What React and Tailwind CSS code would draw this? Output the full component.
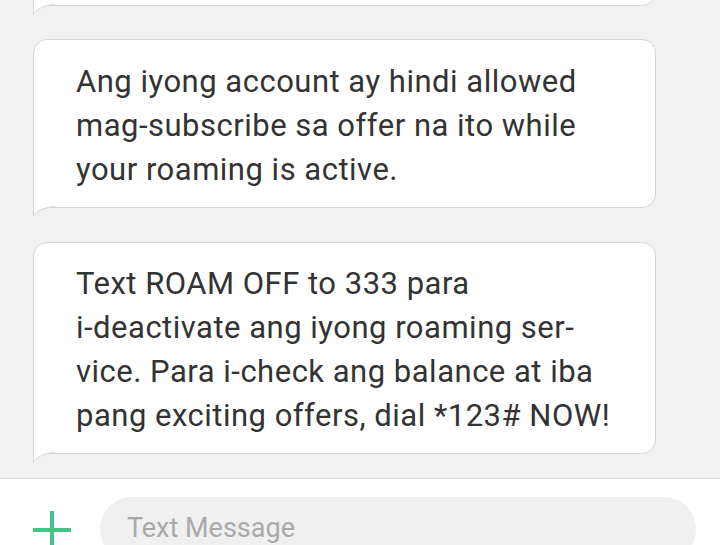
import React from "react";

const Tail = () => (
  <svg
    className="absolute left-[-1px] top-[calc(100%-1px)] w-[24px] h-[11px]"
    viewBox="0 0 24 11"
  >
    <path d="M0 0 V10 C4 5 10 1.5 22 0.5 L24 0 Z" fill="#ffffff" />
    <path
      d="M0.5 0 V10 C4 5 10 1.5 22 0.5"
      fill="none"
      stroke="#d6d6d6"
      strokeWidth="1"
    />
  </svg>
);

const Bubble = ({ lines, className = "" }) => (
  <div
    className={`relative ml-[33px] w-[623px] bg-white border border-[#d6d6d6] rounded-[14px] rounded-bl-none pl-[42px] pr-4 ${className}`}
  >
    {lines.map((line, i) => (
      <div key={i} className="whitespace-nowrap">
        {line}
      </div>
    ))}
    <Tail />
  </div>
);

const messages = [
  [
    "Ang iyong account ay hindi allowed",
    "mag-subscribe sa offer na ito while",
    "your roaming is active.",
  ],
  [
    "Text ROAM OFF to 333 para",
    "i-deactivate ang iyong roaming ser-",
    "vice. Para i-check ang balance at iba",
    "pang exciting offers, dial *123# NOW!",
  ],
];

export default function App() {
  return (
    <div
      className="w-[720px] h-[545px] overflow-hidden flex flex-col bg-white"
      style={{ fontFamily: "Roboto, 'Noto Sans', sans-serif" }}
    >
      <div className="flex-1 bg-[#f1f1f1] overflow-hidden text-[31px] tracking-[0.5px] leading-[44px] text-[#333333]">
        <Bubble lines={[]} className="h-[60px] -mt-[54px]" />
        <Bubble lines={messages[0]} className="mt-[33px] pt-[20px] pb-[15px]" />
        <Bubble lines={messages[1]} className="mt-[34px] pt-[19px] pb-[15px]" />
      </div>
      <div className="h-[67px] shrink-0 border-t border-[#d8d8d8] bg-white flex items-start">
        <div className="w-[100px] shrink-0 flex justify-start pl-[33px] pt-[32px]">
          <svg width="38" height="38" viewBox="0 0 38 38">
            <path d="M19 0 V38 M0 19 H38" stroke="#45c585" strokeWidth="4" />
          </svg>
        </div>
        <div className="mt-[18px] w-[596px] h-[64px] rounded-full bg-[#f0f0f0] pl-[27px] pt-[14px] text-[27px] leading-[34px] text-[#a9a9a9]">
          Text Message
        </div>
      </div>
    </div>
  );
}
